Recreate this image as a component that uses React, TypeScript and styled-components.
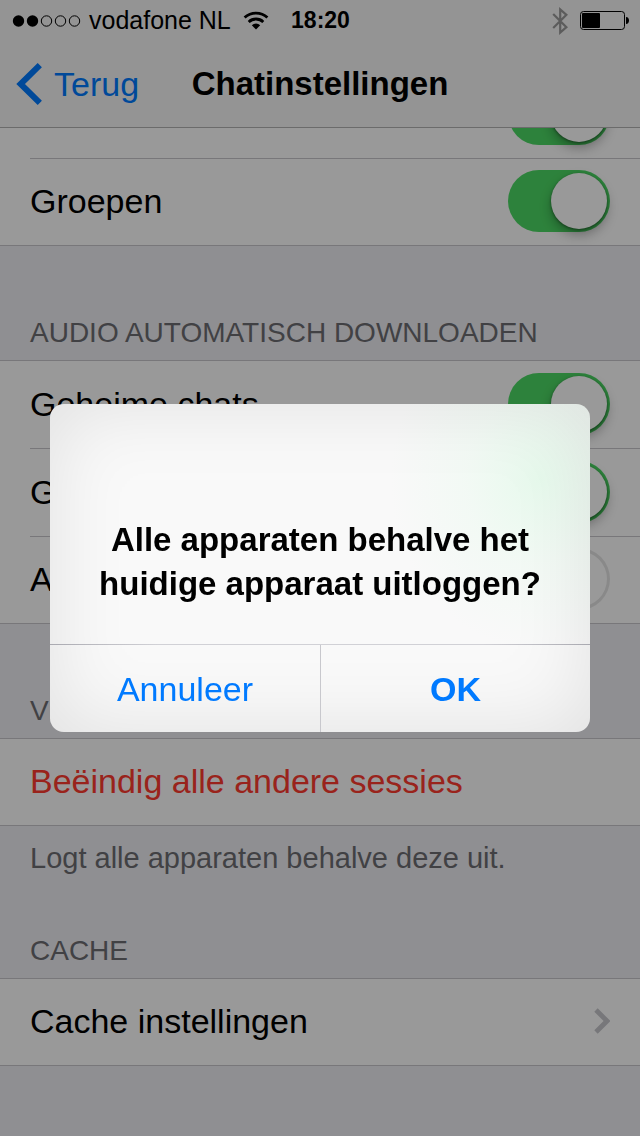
import React from "react";
import styled, { createGlobalStyle } from "styled-components";

const GlobalStyle = createGlobalStyle`
  * { box-sizing: border-box; }
  html, body { margin: 0; padding: 0; }
  body {
    background: #efeff4;
    color: #000;
    font-family: "Liberation Sans", Arial, sans-serif;
    font-size: 34px;
    line-height: 40px;
  }
  button, input { font: inherit; margin: 0; }
  h1, h2, p { margin: 0; font-size: inherit; font-weight: inherit; }
`;

const Screen = styled.div`
  min-height: 100vh;
  overflow: hidden;
  background: #efeff4;
`;

const Header = styled.header`
  position: relative;
  z-index: 1;
  background: #f7f7f7;
  border-bottom: 1px solid #b2b2b2;
`;

const StatusBar = styled.div`
  display: grid;
  grid-template-columns: 1fr auto 1fr;
  align-items: center;
  height: 41px;
  padding: 0 11px 0 12px;
  font-size: 25px;
  line-height: 29px;
`;

const StatusGroup = styled.div<{ $end?: boolean }>`
  display: flex;
  align-items: center;
  justify-content: ${(p) => (p.$end ? "flex-end" : "flex-start")};
  gap: ${(p) => (p.$end ? 12 : 0)}px;
  white-space: nowrap;
`;

const Carrier = styled.span`
  margin: 0 12px 0 8px;
`;

const Clock = styled.time`
  font-size: 23px;
  font-weight: 700;
`;

const NavBar = styled.nav`
  display: grid;
  grid-template-columns: 1fr auto 1fr;
  align-items: center;
  height: 86px;
  padding: 0 16px;
`;

const BackButton = styled.button`
  display: flex;
  align-items: center;
  justify-self: start;
  gap: 11px;
  padding: 0;
  border: 0;
  background: none;
  color: #007aff;
`;

const Title = styled.h1`
  font-size: 33px;
  font-weight: 700;
`;

const List = styled.main`
  margin-top: -58px;
  padding-bottom: 70px;
`;

const Group = styled.section`
  background: #fff;
  border-bottom: 1px solid #c8c7cc;
`;

const Cells = styled.div`
  border-top: 1px solid #c8c7cc;
  padding-left: 30px;
`;

const cell = `
  display: flex;
  align-items: center;
  justify-content: space-between;
  height: 88px;
  padding: 0 30px 2px 0;
  & + & { border-top: 1px solid #c8c7cc; }
  &:first-child { height: 87px; }
  &:last-child:not(:only-child) { height: 87px; }
  &:only-child { height: 86px; }
`;

const SwitchCell = styled.label`
  ${cell}
`;

const ButtonCell = styled.button<{ $danger?: boolean }>`
  ${cell}
  width: 100%;
  border: 0;
  background: none;
  text-align: left;
  color: ${(p) => (p.$danger ? "#ff3b30" : "#000")};
`;

const Switch = styled.input`
  appearance: none;
  flex: none;
  width: 102px;
  height: 62px;
  padding: 3px;
  display: flex;
  justify-content: flex-start;
  border-radius: 31px;
  background: #fff;
  box-shadow: inset 0 0 0 3px #e5e5e5;

  &::before {
    content: "";
    width: 56px;
    height: 56px;
    border-radius: 50%;
    background: #fff;
    box-shadow: 0 6px 12px rgba(0, 0, 0, 0.3), 0 1px 3px rgba(0, 0, 0, 0.4);
  }

  &:checked {
    justify-content: flex-end;
    background: #4cd964;
    box-shadow: none;
  }
`;

const GroupHeading = styled.h2<{ $compact?: boolean }>`
  display: flex;
  align-items: flex-end;
  height: ${(p) => (p.$compact ? 88 : 114)}px;
  padding: 0 30px 11px;
  font-size: 28px;
  line-height: 32px;
  color: #6d6d72;
`;

const GroupNote = styled.p`
  padding: 16px 30px;
  font-size: 29px;
  line-height: 32px;
  color: #6d6d72;
`;

const Backdrop = styled.div`
  position: fixed;
  inset: 0;
  z-index: 2;
  display: flex;
  align-items: center;
  justify-content: center;
  padding: 50px;
  background: rgba(0, 0, 0, 0.4);
`;

const Dialog = styled.div`
  width: 100%;
  max-width: 540px;
  overflow: hidden;
  border-radius: 14px;
  box-shadow: inset 0 0 80px rgba(0, 0, 0, 0.1);
  background:
    radial-gradient(ellipse 150px 170px at 490px 76px, rgba(216, 250, 226, 0.55), rgba(226, 250, 233, 0.28) 50%, transparent),
    #f9f9f9;
`;

const Message = styled.p`
  padding: 114px 40px 38px;
  font-size: 33px;
  font-weight: 700;
  line-height: 44px;
  text-align: center;
`;

const Actions = styled.div`
  display: grid;
  grid-template-columns: 1fr 1fr;
  border-top: 1px solid;
  border-image: linear-gradient(90deg, #a9a9b0, #d1d1d6 20%, #d1d1d6 80%, #a9a9b0) 1;
`;

const Action = styled.button<{ $primary?: boolean }>`
  height: 87px;
  padding: 0;
  border: 0;
  border-left: ${(p) => (p.$primary ? "1px solid #c8c8cd" : "0")};
  background: none;
  color: #007aff;
  font-weight: ${(p) => (p.$primary ? 700 : 400)};
`;

const SignalIcon = () => (
  <svg width="69" height="14" viewBox="0 0 69 14" aria-hidden="true">
    {[0, 1, 2, 3, 4].map((i) => (
      <circle
        key={i}
        cx={6.5 + i * 14}
        cy="7"
        r={i < 2 ? 5.7 : 5.2}
        fill={i < 2 ? "#000" : "none"}
        stroke={i < 2 ? "none" : "#000"}
      />
    ))}
  </svg>
);

const WifiIcon = () => (
  <svg width="26" height="20" viewBox="0 0 26 20" aria-hidden="true">
    <g fill="none" stroke="#000" strokeWidth="2.8">
      <path d="M1.6 6.6a16.6 16.6 0 0 1 22.8 0" />
      <path d="M5.7 10.9a10.6 10.6 0 0 1 14.6 0" />
    </g>
    <path d="M8.8 14.2a6.2 6.2 0 0 1 8.4 0L13 18.6z" />
  </svg>
);

const BluetoothIcon = () => (
  <svg width="16" height="28" viewBox="0 0 16 28" aria-hidden="true">
    <path d="M1.2 7L14.4 20.2 8.2 25.6V2.4l6.2 5.4L1.2 21" fill="none" stroke="#9a9a9a" strokeWidth="2.2" />
  </svg>
);

const BatteryIcon = () => (
  <svg width="49" height="19" viewBox="0 0 49 19" aria-hidden="true">
    <rect x="0.5" y="0.5" width="44" height="18" rx="3" fill="none" stroke="#000" />
    <rect x="2" y="2" width="18" height="15" rx="1" />
    <path d="M46 6c4 0 4 7 0 7z" />
  </svg>
);

const BackIcon = () => (
  <svg width="27" height="42" viewBox="0 0 27 42" aria-hidden="true">
    <path d="M23.8 2.2L4.6 21l19.2 18.8" fill="none" stroke="currentColor" strokeWidth="6" />
  </svg>
);

const DisclosureIcon = () => (
  <svg width="16" height="26" viewBox="0 0 16 26" aria-hidden="true">
    <path d="M2 2l11 11L2 24" fill="none" stroke="#c7c7cc" strokeWidth="4.8" />
  </svg>
);

function SwitchRow({ label, on }: { label: string; on?: boolean }) {
  return (
    <SwitchCell>
      {label}
      <Switch type="checkbox" defaultChecked={on} />
    </SwitchCell>
  );
}

export default function App() {
  return (
    <>
      <GlobalStyle />
      <Screen>
        <Header>
          <StatusBar>
            <StatusGroup>
              <SignalIcon />
              <Carrier>vodafone NL</Carrier>
              <WifiIcon />
            </StatusGroup>
            <Clock>18:20</Clock>
            <StatusGroup $end>
              <BluetoothIcon />
              <BatteryIcon />
            </StatusGroup>
          </StatusBar>
          <NavBar>
            <BackButton type="button">
              <BackIcon />
              Terug
            </BackButton>
            <Title>Chatinstellingen</Title>
          </NavBar>
        </Header>

        <List>
          <Group>
            <Cells>
              <SwitchRow label="Geheime chats" on />
              <SwitchRow label="Groepen" on />
            </Cells>
          </Group>

          <GroupHeading>AUDIO AUTOMATISCH DOWNLOADEN</GroupHeading>
          <Group>
            <Cells>
              <SwitchRow label="Geheime chats" on />
              <SwitchRow label="Groepen" on />
              <SwitchRow label="Alle chats" />
            </Cells>
          </Group>

          <GroupHeading>VEILIGHEID</GroupHeading>
          <Group>
            <Cells>
              <ButtonCell type="button" $danger>
                Beëindig alle andere sessies
              </ButtonCell>
            </Cells>
          </Group>
          <GroupNote>Logt alle apparaten behalve deze uit.</GroupNote>

          <GroupHeading $compact>CACHE</GroupHeading>
          <Group>
            <Cells>
              <ButtonCell type="button">
                Cache instellingen
                <DisclosureIcon />
              </ButtonCell>
            </Cells>
          </Group>
        </List>
      </Screen>

      <Backdrop>
        <Dialog role="alertdialog" aria-modal="true" aria-labelledby="logout-message">
          <Message id="logout-message">Alle apparaten behalve het huidige apparaat uitloggen?</Message>
          <Actions>
            <Action type="button">Annuleer</Action>
            <Action type="button" $primary>
              OK
            </Action>
          </Actions>
        </Dialog>
      </Backdrop>
    </>
  );
}
